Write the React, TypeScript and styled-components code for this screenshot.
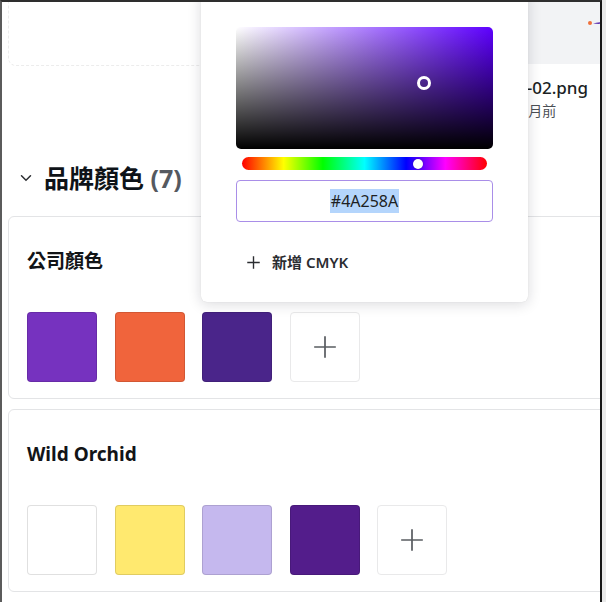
import styled, { createGlobalStyle } from "styled-components";

const GlobalStyle = createGlobalStyle`
  body {
    margin: 0;
    background: #e9e9e9;
    font-family: "Noto Sans", "Noto Sans CJK TC", sans-serif;
    color: #0e1318;
  }
`;

const Frame = styled.div`
  position: relative;
  width: 602px;
  height: 602px;
  box-sizing: border-box;
  border-left: 2px solid #5b5b5b;
  border-top: 2px solid #2e2e2e;
  border-right: 2px solid #161616;
  background: #fff;
  overflow: hidden;
`;

const Page = styled.div`
  width: 660px;
  padding-left: 6px;
  box-sizing: border-box;
`;

const FileRow = styled.div`
  display: grid;
  grid-template-columns: 439px 1fr;
  column-gap: 16px;
  margin-top: -10px;
  align-items: start;
`;

const EmptyFile = styled.div`
  height: 74px;
  box-sizing: border-box;
  border: 1px dashed #ececec;
  border-radius: 8px;
`;

const FileCard = styled.div`
  display: flex;
  flex-direction: column;
`;

const Thumb = styled.div`
  height: 72px;
  box-sizing: border-box;
  background: #f2f3f5;
  border-radius: 6px;
  padding: 17px 0 0 125px;
`;

const FileName = styled.div`
  margin-top: 13px;
  font-size: 17px;
  line-height: 22px;
  font-weight: 500;
  color: #1b1f24;
  white-space: nowrap;
`;

const FileMeta = styled.div`
  margin-top: 2px;
  font-size: 14px;
  line-height: 19px;
  color: #4b4f55;
  white-space: nowrap;
`;

const SectionHeader = styled.div`
  display: flex;
  align-items: center;
  gap: 12px;
  height: 32px;
  margin-top: 42px;
  padding-left: 12px;
  color: #0e1318;
`;

const SectionTitle = styled.h2`
  margin: 0;
  font-size: 25px;
  line-height: 32px;
  font-weight: 700;
`;

const Count = styled.span`
  color: #55595f;
`;

const CardList = styled.div`
  display: flex;
  flex-direction: column;
  gap: 10px;
  margin-top: 22px;
`;

const PaletteCard = styled.section`
  border: 1px solid #e3e4e6;
  border-radius: 6px;
  padding: 31px 18px 16px;
`;

const PaletteTitle = styled.h3`
  margin: 0;
  font-size: 19px;
  line-height: 26px;
  font-weight: 700;
  color: #121417;
`;

const Swatches = styled.div`
  display: flex;
  gap: 17.5px;
  margin-top: 38px;
`;

const Swatch = styled.div<{ $color: string }>`
  width: 70px;
  height: 70px;
  border-radius: 4px;
  background: ${(p) => p.$color};
  box-shadow: inset 0 0 0 1px rgba(0, 0, 0, 0.12);
`;

const AddSwatch = styled.button`
  width: 70px;
  height: 70px;
  padding: 0;
  border: 1px solid #e9e9ea;
  border-radius: 4px;
  background: #fff;
  color: #5a5d62;
  display: flex;
  align-items: center;
  justify-content: center;
`;

const Popover = styled.div`
  position: absolute;
  left: 199px;
  top: -10px;
  width: 327px;
  box-sizing: border-box;
  padding: 35px 35px 29px;
  background: #fff;
  border-radius: 6px;
  box-shadow: 0 2px 14px rgba(20, 20, 40, 0.16), 0 0 1px rgba(0, 0, 0, 0.15);
`;

const SatBox = styled.div<{ $hue: number }>`
  position: relative;
  height: 122px;
  border-radius: 5px;
  background: linear-gradient(to top, #000, rgba(0, 0, 0, 0)),
    linear-gradient(to right, #fff, hsl(${(p) => p.$hue}, 100%, 50%));
`;

const SatPointer = styled.div`
  position: absolute;
  width: 14px;
  height: 14px;
  box-sizing: border-box;
  border: 3px solid #fff;
  border-radius: 50%;
  transform: translate(-50%, -50%);
`;

const HueTrack = styled.div`
  position: relative;
  height: 13px;
  margin: 8px 6px 0;
  border-radius: 7px;
  background: linear-gradient(
    to right,
    #f00 0%,
    #ff0 17%,
    #0f0 33%,
    #0ff 50%,
    #00f 67%,
    #f0f 83%,
    #f00 100%
  );
`;

const HueThumb = styled.div`
  position: absolute;
  top: 50%;
  width: 10px;
  height: 10px;
  border-radius: 50%;
  background: #fff;
  box-shadow: 0 0 2px rgba(0, 0, 0, 0.35);
  transform: translate(-50%, -50%);
`;

const HexField = styled.div`
  height: 42px;
  margin-top: 10px;
  box-sizing: border-box;
  border: 1px solid #a98ee8;
  border-radius: 4px;
  display: flex;
  align-items: center;
  justify-content: center;
  font-size: 16px;
  color: #1d1f23;
`;

const Selected = styled.span`
  background: #b4d5fc;
  padding: 2px 1px;
  line-height: 20px;
`;

const AddCmyk = styled.button`
  display: flex;
  align-items: center;
  gap: 11px;
  margin-top: 29px;
  padding: 0 0 0 10px;
  border: none;
  background: none;
  font-family: inherit;
  font-size: 15px;
  line-height: 22px;
  font-weight: 600;
  color: #2b2d31;
`;

const Plus = ({ size, stroke }: { size: number; stroke: number }) => (
  <svg width={size} height={size} viewBox="0 0 24 24" fill="none" stroke="currentColor" strokeWidth={stroke}>
    <path d="M12 2v20M2 12h20" />
  </svg>
);

const Chevron = () => (
  <svg width="12" height="8" viewBox="0 0 12 8" fill="none" stroke="#2b2d31" strokeWidth={1.5} strokeLinecap="round">
    <path d="M1.5 1.8 6 6.2l4.5-4.4" />
  </svg>
);

const LogoMark = () => (
  <svg width="20" height="6" viewBox="0 0 20 6">
    <circle cx="2" cy="3" r="2" fill="#f0703a" />
    <path d="M5 3.4 C9 2.4 14 2 20 1.6 L20 3.6 C14 3.8 9 4.2 5 3.4Z" fill="#5a2fb0" />
  </svg>
);

const hue = 262;
const sat = 0.73;
const val = 0.54;

const palettes = [
  { name: "公司顏色", colors: ["#7632bf", "#f0643c", "#4a258a"] },
  { name: "Wild Orchid", colors: ["#ffffff", "#ffe96f", "#c5b8ee", "#531d8b"] },
];

export default function App() {
  return (
    <>
      <GlobalStyle />
      <Frame>
        <Page>
          <FileRow>
            <EmptyFile />
            <FileCard>
              <Thumb>
                <LogoMark />
              </Thumb>
              <FileName>2023-05-02.png</FileName>
              <FileMeta>更新 12 個月前</FileMeta>
            </FileCard>
          </FileRow>

          <SectionHeader>
            <Chevron />
            <SectionTitle>
              品牌顏色 <Count>(7)</Count>
            </SectionTitle>
          </SectionHeader>

          <CardList>
            {palettes.map((p) => (
              <PaletteCard key={p.name}>
                <PaletteTitle>{p.name}</PaletteTitle>
                <Swatches>
                  {p.colors.map((c, i) => (
                    <Swatch key={i} $color={c} />
                  ))}
                  <AddSwatch aria-label="新增顏色">
                    <Plus size={26} stroke={1.6} />
                  </AddSwatch>
                </Swatches>
              </PaletteCard>
            ))}
          </CardList>
        </Page>

        <Popover>
          <SatBox $hue={hue}>
            <SatPointer style={{ left: `${sat * 100}%`, top: `${(1 - val) * 100}%` }} />
          </SatBox>
          <HueTrack>
            <HueThumb style={{ left: `calc(5px + (100% - 10px) * ${hue / 360})` }} />
          </HueTrack>
          <HexField>
            <Selected>#4A258A</Selected>
          </HexField>
          <AddCmyk>
            <Plus size={15} stroke={2.2} />
            新增 CMYK
          </AddCmyk>
        </Popover>
      </Frame>
    </>
  );
}
